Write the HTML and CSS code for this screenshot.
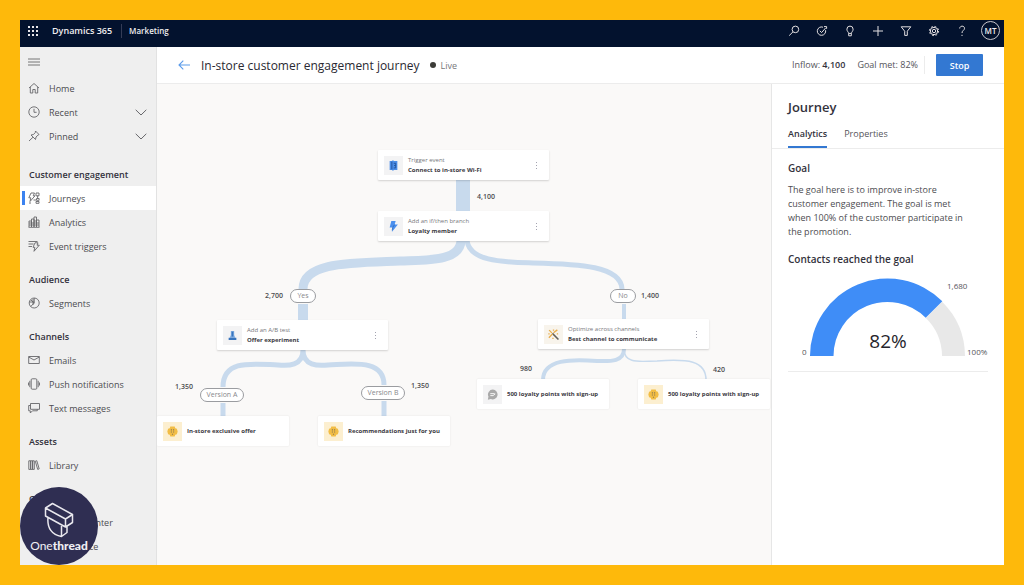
FILE: index.html
```html
<!DOCTYPE html>
<html lang="en">
<head>
<meta charset="utf-8">
<title>In-store customer engagement journey</title>
<link rel="stylesheet" href="styles.css">
</head>
<body>
<div class="app">
  <header class="topbar">
    <button class="icon-btn" aria-label="App launcher">
      <svg width="10" height="10" viewBox="0 0 10 10" fill="#e8e6ea"><path d="M0 0h2v2H0zM4 0h2v2H4zM8 0h2v2H8zM0 4h2v2H0zM4 4h2v2H4zM8 4h2v2H8zM0 8h2v2H0zM4 8h2v2H4zM8 8h2v2H8z"/></svg>
    </button>
    <span class="brand">Dynamics 365</span>
    <span class="area">Marketing</span>
    <div class="tools">
      <button class="icon-btn" aria-label="Search"><svg class="ico" viewBox="0 0 12 12"><circle cx="7.4" cy="4.4" r="3.3"/><path d="M5 6.8 1.2 10.6"/></svg></button>
      <button class="icon-btn" aria-label="Tasks"><svg class="ico" viewBox="0 0 12 12"><path d="M9.6 5.2A4.2 4.2 0 1 1 7 2.2M3.8 5.8l1.8 1.8 4-4.6M8 1.6h2.6v2.2"/></svg></button>
      <button class="icon-btn" aria-label="Ideas"><svg class="ico" viewBox="0 0 12 12"><path d="M4.6 8.4C4.6 7 2.9 6.400 2.900 4.200a3.100 3.100 0 0 1 6.200 0C9.100 6.400 7.400 7 7.400 8.400zM4.700 8.400v2.400h2.600V8.400"/></svg></button>
      <button class="icon-btn" aria-label="Add"><svg class="ico" viewBox="0 0 12 12"><path d="M6 1v10M1 6h10"/></svg></button>
      <button class="icon-btn" aria-label="Filter"><svg class="ico" viewBox="0 0 12 12"><path d="M1.200 1.800h9.600L7.300 6.200v4.200H4.700V6.200z"/></svg></button>
      <button class="icon-btn" aria-label="Settings"><svg class="ico" viewBox="0 0 12 12"><circle cx="6" cy="6" r="1.700"/><circle cx="6" cy="6" r="3.700"/><circle cx="6" cy="6" r="4.600" stroke-dasharray="1.800 1.810"/></svg></button>
      <button class="icon-btn" aria-label="Help"><svg class="ico" viewBox="0 0 12 12"><path d="M3.700 3.500C3.700 .4 8.500.4 8.500 3.300 8.500 5.400 6 5.400 6 8M6 9.800V11"/></svg></button>
      <button class="avatar" aria-label="Account">MT</button>
    </div>
  </header>

  <div class="body">
    <nav class="sidebar">
      <button class="menu" aria-label="Collapse menu"><svg width="12" height="8" viewBox="0 0 12 8" stroke="#777" fill="none"><path d="M0 1h12M0 4h12M0 7h12"/></svg></button>
      <a class="item" href="#"><svg class="nav-ico" viewBox="0 0 12 12"><path d="M1 6l5-4.500L11 6M2.300 5v6h2.500V7.500h2.400V11h2.500V5"/></svg>Home</a>
      <a class="item" href="#"><svg class="nav-ico" viewBox="0 0 12 12"><circle cx="6" cy="6" r="5.200"/><path d="M6 2.800V6.300h2.600"/></svg>Recent<svg class="chev" viewBox="0 0 12 7"><path d="M.7.800 6 6l5.300-5.200"/></svg></a>
      <a class="item" href="#"><svg class="nav-ico" viewBox="0 0 12 12"><path d="M7.500 1l3.500 3.500-1 .6-2 1.900-.5 2.500L3 5l2.500-.5 1.800-2zM5 7.200 1 11"/></svg>Pinned<svg class="chev" viewBox="0 0 12 7"><path d="M.7.800 6 6l5.300-5.200"/></svg></a>

      <section class="group first">
        <h2>Customer engagement</h2>
        <a class="item active" href="#"><svg class="nav-ico" viewBox="0 0 12 12"><path d="M3 1h3.500L5.200 3.800H7L2 9.500l.8-3.700H.8zM8 1h3v2.800H8zM8.500 6.500h2.600v1.800H8.500zM8 9.500h3v1.800H8zM9.600 3.800v2.700M5.500 8H8M1 11h2"/></svg>Journeys</a>
        <a class="item" href="#"><svg class="nav-ico" viewBox="0 0 12 12"><path d="M1 11V5h2.500v6M3.500 11V3H6v8M6 11V1h2.500v10M8.500 11V4H11v7M.5 11.300h11M1 7h10M1 9h10M6 5h2.500"/></svg>Analytics</a>
        <a class="item" href="#"><svg class="nav-ico" viewBox="0 0 12 12"><path d="M.5 1.500h9M.5 4h5M.5 6.500h3.500M7 2.800h3L9 5.200h2.300L6 11.300l.8-4H5z"/></svg>Event triggers</a>
      </section>
      <section class="group">
        <h2>Audience</h2>
        <a class="item" href="#"><svg class="nav-ico" viewBox="0 0 12 12"><circle cx="6.200" cy="6" r="5"/><path d="M6.200 1v5L2.700 9.500M6.200 6 3 3M1.500 5h4.700M5 2v6"/></svg>Segments</a>
      </section>
      <section class="group">
        <h2>Channels</h2>
        <a class="item" href="#"><svg class="nav-ico" viewBox="0 0 12 12"><path d="M.7 2.500h10.600v7H.7zM.7 3 6 6l5.300-3"/></svg>Emails</a>
        <a class="item" href="#"><svg class="nav-ico" viewBox="0 0 12 12"><rect x="3.200" y=".8" width="5.600" height="10.400" rx="1"/><path d="M1.800 2.800v6.400M10.200 2.800v6.400M.5 4.500v3M11.500 4.500v3"/></svg>Push notifications</a>
        <a class="item" href="#"><svg class="nav-ico" viewBox="0 0 12 12"><path d="M2.500 1.500h9v5.800h-9zM2.500 3.500H.7v5.300h1.600V11l2.200-2.200h4.800V7.300"/></svg>Text messages</a>
      </section>
      <section class="group">
        <h2>Assets</h2>
        <a class="item" href="#"><svg class="nav-ico" viewBox="0 0 12 12"><path d="M.8 1.800h1.900v8.600H.8zM2.700 1.800h1.900v8.600H2.700zM4.600 1.800h1.700v8.600H4.600zM7.300 2.200l1.500-.5 2.400 8.200-1.500.500z"/></svg>Library</a>
      </section>
      <section class="group">
        <h2>Compliance</h2>
        <a class="item" href="#"><svg class="nav-ico" viewBox="0 0 12 12"><circle cx="6" cy="6" r="4.500"/></svg>Consent center</a>
        <a class="item" href="#"><svg class="nav-ico" viewBox="0 0 12 12"><path d="M2 2h8v8H2z"/></svg>Compliance</a>
      </section>
    </nav>

    <main class="main">
      <div class="titlebar">
        <button class="back" aria-label="Back"><svg width="12" height="10" viewBox="0 0 12 10" fill="none" stroke="#5b9bea" stroke-width="1.100"><path d="M5.300.7 1 5l4.300 4.300M1 5h11"/></svg></button>
        <h1>In-store customer engagement journey</h1>
        <span class="status">Live</span>
        <span class="stat">Inflow: <b>4,100</b></span>
        <span class="stat">Goal met: 82%</span>
        <button class="stop">Stop</button>
      </div>

      <div class="work">
        <div class="canvas">
          <svg class="links" width="614" height="481" viewBox="0 0 614 481" fill="none" stroke="#c8daed">
            <path stroke-width="14" d="M306 96v31"/>
            <path stroke-width="9" d="M304 156C304 178 268 176 243 177 193 179 146 178 146 205"/>
            <path stroke-width="5" d="M310 156C312 178 348 178 376 179 423 180 464 182 465 205"/>
            <path stroke-width="10" d="M146 220v16"/>
            <path stroke-width="4" d="M467 220v16"/>
            <path stroke-width="5" d="M146 266C146 282 131 282 121 281 96 280 66 275 66 303M146 266C146 282 161 282 171 281 196 280 227 275 227 301M66 319v14M227 317v16"/>
            <path stroke-width="4" d="M467 265C467 279 450 277 440 277 415 275 386 275 386 296"/>
            <path stroke-width="1.500" d="M467 265C467 281 485 277 500 277 530 275 549 276 549 296"/>
          </svg>

          <article class="node n-trigger">
            <span class="tile"><svg viewBox="0 0 10 10"><path fill="#4c8ee8" d="M1.500 1h2l1-.7 1 .7h3v8h-3l-1 .7-1-.7h-2z"/><path stroke="#1f4f96" fill="none" stroke-width=".8" d="M3.500 1.500v7M5.200 3h1.800v2H5.500M7 5v2.200H5.200"/></svg></span>
            <span class="txt"><small>Trigger event</small><strong>Connect to in-store Wi-Fi</strong></span>
            <button class="more" aria-label="More options"></button>
          </article>
          <article class="node n-branch">
            <span class="tile"><svg viewBox="0 0 10 10"><path fill="#4a8fee" d="M3 0h4L6 3.200h3L3.500 10l.8-4.200H1.500z"/><path stroke="#2866b8" fill="none" stroke-width=".7" d="M6 3.200 4.300 5.800 3.800 8.500"/></svg></span>
            <span class="txt"><small>Add an if/then branch</small><strong>Loyalty member</strong></span>
            <button class="more" aria-label="More options"></button>
          </article>
          <article class="node n-offer">
            <span class="tile"><svg viewBox="0 0 10 10"><path fill="#7ba9de" d="M3.500 1h3v3.500l1 2.500h-5l1-2.500z"/><path fill="#3975bd" d="M4.300 1.500h1.400V6H4.300zM1.500 7h7v2h-7z"/></svg></span>
            <span class="txt"><small>Add an A/B test</small><strong>Offer experiment</strong></span>
            <button class="more" aria-label="More options"></button>
          </article>
          <article class="node n-best">
            <span class="tile cream"><svg viewBox="0 0 10 10"><path stroke="#64605a" stroke-width="1.400" d="M4 4l5.500 5.500"/><path stroke="#e8ad4c" stroke-width="1.200" d="M1 1l2.500 2.500M4 4.500.8 8M5 3.500 8.500.8M5 .5v1.200M.3 4.500h1.200M8 4.500h1.200M4.500 8v1.200"/></svg></span>
            <span class="txt"><small>Optimize across channels</small><strong>Best channel to communicate</strong></span>
            <button class="more" aria-label="More options"></button>
          </article>

          <article class="node leaf n-sms">
            <span class="tile"><svg viewBox="0 0 10 10"><path fill="#a9a9a9" d="M5.300.5a4.500 4.500 0 1 1-1.800 8.700L.8 9.800l.5-2.900A4.500 4.500 0 0 1 5.300.5z"/><path stroke="#f3f3f3" fill="none" stroke-width=".9" d="M3 4.200h4M3 6h2.500l2-1.500"/></svg></span>
            <strong>500 loyalty points with sign-up</strong>
          </article>
          <article class="node leaf n-push">
            <span class="tile gold"><svg viewBox="0 0 10 10"><path fill="#f2bd45" d="M3 .5h4l.5 1.500 1.500.5.7 2.500L9 7.500 7.500 8 7 9.500H3L2.500 8 1 7.500.3 5 1 2.500 2.500 2z"/><path fill="#8a7a52" d="M3.500 3h1v1h-1zM5.500 3h1v1h-1zM3.500 5h1v1h-1zM5.500 5h1v1h-1zM4.500 7h1v1h-1z"/></svg></span>
            <strong>500 loyalty points with sign-up</strong>
          </article>
          <article class="node leaf n-store">
            <span class="tile gold"><svg viewBox="0 0 10 10"><path fill="#f2bd45" d="M3 .5h4l.5 1.500 1.500.5.7 2.500L9 7.500 7.500 8 7 9.500H3L2.500 8 1 7.500.3 5 1 2.500 2.500 2z"/><path fill="#8a7a52" d="M3.500 3h1v1h-1zM5.500 3h1v1h-1zM3.500 5h1v1h-1zM5.500 5h1v1h-1zM4.500 7h1v1h-1z"/></svg></span>
            <strong>In-store exclusive offer</strong>
          </article>
          <article class="node leaf n-reco">
            <span class="tile gold"><svg viewBox="0 0 10 10"><path fill="#f2bd45" d="M3 .5h4l.5 1.500 1.500.5.7 2.500L9 7.500 7.500 8 7 9.500H3L2.500 8 1 7.500.3 5 1 2.500 2.500 2z"/><path fill="#8a7a52" d="M3.500 3h1v1h-1zM5.500 3h1v1h-1zM3.500 5h1v1h-1zM5.500 5h1v1h-1zM4.500 7h1v1h-1z"/></svg></span>
            <strong>Recommendations just for you</strong>
          </article>

          <span class="pill p-yes">Yes</span>
          <span class="pill p-no">No</span>
          <span class="pill p-a">Version A</span>
          <span class="pill p-b">Version B</span>

          <span class="count c-total">4,100</span>
          <span class="count c-yes">2,700</span>
          <span class="count c-no">1,400</span>
          <span class="count c-a">1,350</span>
          <span class="count c-b">1,350</span>
          <span class="count c-sms">980</span>
          <span class="count c-push">420</span>
        </div>

        <aside class="panel">
          <h2>Journey</h2>
          <div class="tabs" role="tablist">
            <button class="tab on" role="tab" aria-selected="true">Analytics</button>
            <button class="tab" role="tab" aria-selected="false">Properties</button>
          </div>
          <div class="details">
            <h3>Goal</h3>
            <p>The goal here is to improve in-store customer engagement. The goal is met when 100% of the customer participate in the promotion.</p>
            <h3>Contacts reached the goal</h3>
            <svg class="gauge" width="204" height="84" viewBox="0 0 204 84">
              <path fill="#e8e8e8" d="M154.100 26.700A77 77 0 0 1 177 81H154A54 54 0 0 0 137.900 42.900z"/>
              <path fill="#3f8df7" d="M22 81A77.500 77.500 0 0 1 154.300 26.200L137.700 42.800A54 54 0 0 0 45.500 81z"/>
              <text x="14" y="80" class="g-label">0</text>
              <text x="179" y="80" class="g-label">100%</text>
              <text x="159" y="14" class="g-label">1,680</text>
              <text x="100" y="73" class="g-value">82%</text>
            </svg>
          </div>
        </aside>
      </div>
    </main>
  </div>

  <div class="badge">
    <svg width="32" height="36" viewBox="0 0 32 36" fill="none" stroke="#e9e8ee" stroke-width="1.500" stroke-linejoin="round"><path d="M2.500 6 9.500 1.500 29.500 12.500 22.500 17zM2.500 6v8L22.500 25V17M29.500 12.500v8L22.500 25M5 15.500C4 26 9 33 18.500 34.500V24M18.500 34.500 24 30.500V24.500"/></svg>
    <span>One<b>thread</b></span>
  </div>
</div>
</body>
</html>
```
FILE: styles.css
```css
* { box-sizing: border-box; }

body {
  margin: 0;
  padding: 20px;
  min-height: 100vh;
  display: flex;
  background: #feb90b;
  color: #3b3a42;
  font-family: "Open Sans", "Noto Sans", sans-serif;
  font-size: 9px;
}

h1, h2, h3, p { margin: 0; font-weight: 600; }
button { border: 0; padding: 0; background: none; color: inherit; font: inherit; cursor: pointer; }
svg { display: block; flex: none; }

.app { position: relative; flex: 1; min-width: 0; display: flex; flex-direction: column; background: #fff; }

/* top bar */
.topbar {
  display: flex;
  align-items: center;
  height: 27px;
  padding: 0 4px 6px 8px;
  background: #03122e;
  color: #f0eef0;
}
.icon-btn { display: grid; place-items: center; width: 12px; height: 12px; }
.topbar > .icon-btn { width: 10px; }
.brand { margin-left: 14px; padding-right: 9px; border-right: 1px solid #343c56; font-weight: 600; line-height: 14px; }
.area { margin-left: 7px; font-weight: 600; font-size: 8px; }
.tools { display: flex; align-items: center; gap: 16px; margin-left: auto; }
.ico { width: 12px; height: 12px; fill: none; stroke: #e4e0e2; stroke-width: 1; }
.avatar { width: 19px; height: 19px; margin-left: -3px; border: 1px solid #c9c6cc; border-radius: 50%; font-size: 8px; font-weight: 600; line-height: 17px; }

.body { flex: 1; display: flex; min-height: 0; }

/* navigation */
.sidebar { flex: none; width: 137px; background: #efefef; border-right: 1px solid #e2e2e2; color: #4c4c50; }
.menu { display: flex; align-items: center; width: 100%; height: 29px; padding-left: 8px; }
.item { display: flex; align-items: center; gap: 9px; height: 24px; padding: 0 9px 0 8px; color: inherit; text-decoration: none; }
.item.active { background: #fff; position: relative; }
.item.active::before { content: ""; position: absolute; left: 2px; top: 5px; width: 3px; height: 14px; background: #3b82f0; }
.nav-ico { width: 12px; height: 12px; fill: none; stroke: #66666a; stroke-width: 0.9; }
.chev { width: 12px; height: 7px; margin-left: auto; fill: none; stroke: #66666a; }
.group { margin-top: 10px; }
.group.first { margin-top: 15px; }
.group h2 { padding-left: 9px; font-size: 9px; line-height: 23px; color: #33323c; }

/* title bar */
.main { flex: 1; min-width: 0; display: flex; flex-direction: column; }
.titlebar { display: flex; align-items: center; height: 37px; padding: 0 21px; border-bottom: 1px solid #ececec; }
.back { margin-right: 11px; }
h1 { font-size: 12px; font-weight: 500; color: #2a2932; }
.status { display: flex; align-items: center; gap: 5px; margin: 0 auto 0 10px; color: #77777b; }
.status::before { content: ""; width: 6px; height: 6px; border-radius: 50%; background: #3c3c38; }
.stat { margin-right: 12px; line-height: 18px; color: #55545a; }
.stat b { font-weight: 600; color: #33323c; }
.stat + .stat { margin-right: 11px; padding-right: 6px; border-right: 1px solid #ececec; }
.stop { width: 47px; height: 22px; border-radius: 1px; background: #3378d2; color: #fff; font-weight: 600; }

.work { flex: 1; display: flex; min-height: 0; }

/* journey canvas */
.canvas { position: relative; flex: 1; min-width: 0; overflow: hidden; background: #faf9f8; }
.links { position: absolute; left: 0; top: 0; }
.node {
  position: absolute;
  display: flex;
  align-items: center;
  gap: 5px;
  width: 171px;
  height: 30px;
  padding: 0 10px 0 6px;
  background: #fff;
  border-radius: 1px;
  box-shadow: 0 1px 2px rgba(0, 0, 0, 0.16);
}
.leaf { width: 132px; padding-right: 0; box-shadow: 0 0 2px rgba(0, 0, 0, 0.1); }
.tile { flex: none; display: grid; place-items: center; width: 19px; height: 19px; background: #f3f3f4; }
.tile svg { width: 11px; height: 11px; }
.tile.cream { background: #f8f4ec; }
.tile.gold { background: #fcefd0; }
.txt { display: flex; flex-direction: column; white-space: nowrap; }
.node small { font-size: 6px; line-height: 10px; color: #77777b; }
.node strong { font-size: 6px; line-height: 10px; font-weight: 700; color: #3b3a42; white-space: nowrap; }
.more { width: 6px; height: 9px; margin-left: auto; background: radial-gradient(circle, #a3a3b0 0.8px, transparent 1px) center / 3px 3px repeat-y; }
.n-trigger { left: 221px; top: 66px; }
.n-branch { left: 221px; top: 127px; }
.n-offer { left: 60px; top: 236px; }
.n-best { left: 381px; top: 235px; }
.n-sms { left: 320px; top: 295px; }
.n-push { left: 481px; top: 295px; }
.n-store { left: 0; top: 332px; }
.n-reco { left: 161px; top: 332px; }

.pill {
  position: absolute;
  height: 14px;
  border: 1px solid #9a9ca0;
  border-radius: 7px;
  background: #fff;
  color: #88888c;
  font-size: 7px;
  line-height: 12px;
  text-align: center;
  white-space: nowrap;
}
.p-yes { left: 133px; top: 205px; width: 26px; }
.p-no { left: 453px; top: 205px; width: 26px; }
.p-a { left: 43px; top: 304px; width: 44px; }
.p-b { left: 204px; top: 302px; width: 44px; }

.count { position: absolute; font-size: 7px; line-height: 10px; font-weight: 600; color: #4c4c50; }
.c-total { left: 320px; top: 108px; }
.c-yes { left: 108px; top: 207px; }
.c-no { left: 484px; top: 207px; }
.c-a { left: 18px; top: 298px; }
.c-b { left: 254px; top: 297px; }
.c-sms { left: 363px; top: 280px; }
.c-push { left: 556px; top: 281px; }

/* analytics panel */
.panel { flex: none; width: 233px; border-left: 1px solid #e6e6e6; background: #fff; }
.panel h2 { padding: 13px 16px 0; font-size: 13px; line-height: 20px; color: #33323c; }
.tabs { display: flex; gap: 17px; padding: 7px 16px 0; border-bottom: 1px solid #ececec; }
.tab { height: 24px; padding-bottom: 4px; border-bottom: 2px solid transparent; color: #55545a; }
.tab.on { border-color: #3378d2; color: #33323c; font-weight: 600; }
.details { margin: 0 16px; padding: 12px 0; border-bottom: 1px solid #ececec; }
.details h3 { font-size: 10px; line-height: 14px; color: #33323c; }
.details p { margin: 8px 0 13px; padding-right: 20px; font-weight: 400; line-height: 14px; color: #4c4c50; }
.gauge { margin-top: 9px; overflow: visible; }
.g-label { font-size: 8px; fill: #55545a; }
.g-value { font-size: 19px; font-weight: 500; fill: #26252c; text-anchor: middle; }

/* maker badge */
.badge {
  position: absolute;
  left: 0;
  bottom: 0;
  width: 78px;
  height: 78px;
  padding-top: 15px;
  border-radius: 50%;
  background: #2f2e52;
  color: #f0eff4;
  display: flex;
  flex-direction: column;
  align-items: center;
  font-family: Lato, sans-serif;
  font-size: 12px;
  line-height: 16px;
}
.badge b { font-weight: 900; }
```
